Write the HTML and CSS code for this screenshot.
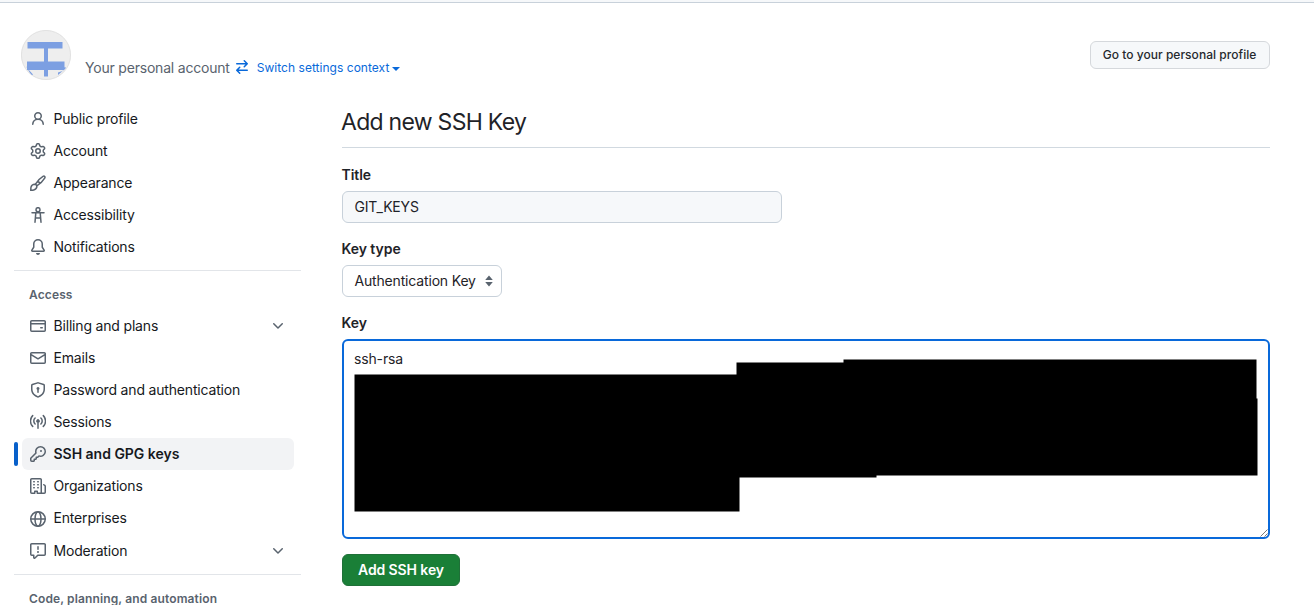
FILE: index.html
```html
<!DOCTYPE html>
<html lang="en">
<head>
<meta charset="utf-8">
<title>Add new SSH Key</title>
<link rel="stylesheet" href="styles.css">
</head>
<body>
<div class="topbar"></div>
<header class="header">
  <svg class="avatar" width="50" height="50" viewBox="0 0 50 50"><defs><clipPath id="round"><circle cx="25" cy="25" r="24.5"/></clipPath></defs><circle cx="25" cy="25" r="24.6" fill="#eee" stroke="#dcdcdc" stroke-width=".8"/><g fill="#7c9fe2" clip-path="url(#round)"><path d="M6.500 12h35v6.500h-35zM23 18h4v14h-4zM6 31.500h37.500v8.500H6zM23 40h4v6.500h-4zM4.500 35.500l2.500 3.500 5 5.500-1.500 1zM37 42.500l4.500-1.500 2.500-4 1 1-8 7z"/></g></svg>
  <div class="context">
    <span class="account">Your personal account</span>
    <svg class="swap" width="16" height="16" viewBox="0 0 16 16"><path d="M5.220 14.780a.75.75 0 0 0 1.060-1.060L4.560 12h8.690a.75.75 0 0 0 0-1.500H4.560l1.720-1.720a.75.75 0 0 0-1.060-1.060l-3 3a.75.75 0 0 0 0 1.060l3 3Zm5.560-6.500a.75.75 0 1 1-1.060-1.060l1.720-1.720H2.750a.75.75 0 0 1 0-1.500h8.690L9.720 2.280a.75.75 0 0 1 1.060-1.060l3 3a.75.75 0 0 1 0 1.060l-3 3Z"/></svg>
    <span class="switch">Switch settings context</span><span class="caret"></span>
  </div>
  <button class="profile-btn"><span>Go to your personal profile</span></button>
</header>
<div class="layout">
<nav class="sidebar">
  <a class="item"><svg class="icon" viewBox="0 0 16 16"><path d="M10.561 8.073a6.005 6.005 0 0 1 3.432 5.142.75.75 0 1 1-1.498.07 4.500 4.500 0 0 0-8.990 0 .75.75 0 0 1-1.498-.07 6.004 6.004 0 0 1 3.431-5.142 3.999 3.999 0 1 1 5.123 0ZM10.500 5a2.500 2.500 0 1 0-5 0 2.500 2.500 0 0 0 5 0Z"/></svg><span>Public profile</span></a>
  <a class="item"><svg class="icon" viewBox="0 0 16 16"><path d="M8 0a8.200 8.200 0 0 1 .701.031C9.444.095 9.990.645 10.160 1.290l.288 1.107c.018.066.079.158.212.224.231.114.454.243.668.386.123.082.233.090.299.071l1.103-.303c.644-.176 1.392.021 1.820.630.270.385.506.792.704 1.218.315.675.111 1.422-.364 1.891l-.814.806c-.049.048-.098.147-.088.294.016.257.016.515 0 .772-.010.147.038.246.088.294l.814.806c.475.469.679 1.216.364 1.891a7.977 7.977 0 0 1-.704 1.217c-.428.610-1.176.807-1.820.630l-1.102-.302c-.067-.019-.177-.011-.300.071a5.909 5.909 0 0 1-.668.386c-.133.066-.194.158-.211.224l-.290 1.106c-.168.646-.715 1.196-1.458 1.260a8.006 8.006 0 0 1-1.402 0c-.743-.064-1.289-.614-1.458-1.260l-.289-1.106c-.018-.066-.079-.158-.212-.224a5.738 5.738 0 0 1-.668-.386c-.123-.082-.233-.090-.299-.071l-1.103.303c-.644.176-1.392-.021-1.820-.630a8.120 8.120 0 0 1-.704-1.218c-.315-.675-.111-1.422.363-1.891l.815-.806c.050-.048.098-.147.088-.294a6.214 6.214 0 0 1 0-.772c.010-.147-.038-.246-.088-.294l-.815-.806C.635 6.045.431 5.298.746 4.623a7.920 7.920 0 0 1 .704-1.217c.428-.610 1.176-.807 1.820-.630l1.102.302c.067.019.177.011.300-.071.214-.143.437-.272.668-.386.133-.066.194-.158.211-.224l.290-1.106C6.009.645 6.556.095 7.299.030 7.530.010 7.764 0 8 0Zm-.571 1.525c-.036.003-.108.036-.137.146l-.289 1.105c-.147.561-.549.967-.998 1.189-.173.086-.340.183-.500.290-.417.278-.970.423-1.529.270l-1.103-.303c-.109-.030-.175.016-.195.045-.220.312-.412.644-.573.990-.014.031-.021.110.059.190l.815.806c.411.406.562.957.530 1.456a4.709 4.709 0 0 0 0 .582c.032.499-.119 1.050-.530 1.456l-.815.806c-.081.080-.073.159-.059.190.162.346.353.677.573.989.020.030.085.076.195.046l1.102-.303c.560-.153 1.113-.008 1.530.270.161.107.328.204.501.290.447.222.850.629.997 1.189l.289 1.105c.029.109.101.143.137.146a6.600 6.600 0 0 0 1.142 0c.036-.003.108-.036.137-.146l.289-1.105c.147-.561.549-.967.998-1.189.173-.086.340-.183.500-.290.417-.278.970-.423 1.529-.270l1.103.303c.109.029.175-.016.195-.045.220-.313.411-.644.573-.990.014-.031.021-.110-.059-.190l-.815-.806c-.411-.406-.562-.957-.530-1.456a4.709 4.709 0 0 0 0-.582c-.032-.499.119-1.050.530-1.456l.815-.806c.081-.080.073-.159.059-.190a6.464 6.464 0 0 0-.573-.989c-.020-.030-.085-.076-.195-.046l-1.102.303c-.560.153-1.113.008-1.530-.270a4.440 4.440 0 0 0-.501-.290c-.447-.222-.850-.629-.997-1.189l-.289-1.105c-.029-.110-.101-.143-.137-.146a6.600 6.600 0 0 0-1.142 0ZM11 8a3 3 0 1 1-6 0 3 3 0 0 1 6 0ZM9.500 8a1.500 1.500 0 1 0-3.001.001A1.500 1.500 0 0 0 9.500 8Z"/></svg><span>Account</span></a>
  <a class="item"><svg class="icon" viewBox="0 0 16 16"><g class="line"><path d="M5.300 9.300C7.200 6.200 10.500 2.900 13 1.400c1.400-.8 2.500.3 1.700 1.700-1.500 2.500-4.800 5.800-7.900 7.700M7.800 6.200c.9.400 1.500 1 2 2M4.900 9.200c-2 0-3.500 1.200-3.900 3-.2 1-.2 2-.2 3 1 0 2 0 3-.2 1.800-.4 3.100-1.900 3.100-3.900C6.700 10 5.900 9.300 4.900 9.200Z"/></g></svg><span>Appearance</span></a>
  <a class="item"><svg class="icon" viewBox="0 0 16 16"><g class="line"><circle cx="8" cy="2.700" r="2"/><path d="M2 5.700h12M5.800 5.900l-.8 9.300M10.200 5.900l.8 9.300M5.600 10.900h4.800"/></g></svg><span>Accessibility</span></a>
  <a class="item"><svg class="icon" viewBox="0 0 16 16"><path d="M8 16a2 2 0 0 0 1.985-1.750c.017-.137-.097-.250-.235-.250h-3.500c-.138 0-.252.113-.235.250A2 2 0 0 0 8 16ZM3 5a5 5 0 0 1 10 0v2.947c0 .050.015.098.042.139l1.703 2.555A1.519 1.519 0 0 1 13.482 13H2.518a1.516 1.516 0 0 1-1.263-2.360l1.703-2.554A.255.255 0 0 0 3 7.947Zm5-3.500A3.500 3.500 0 0 0 4.500 5v2.947c0 .346-.102.683-.294.970l-1.703 2.556a.017.017 0 0 0-.003.010l.001.006.004.006.006.004.007.001h10.964l.007-.001.006-.004.004-.006.001-.007a.017.017 0 0 0-.003-.010l-1.703-2.554a1.745 1.745 0 0 1-.294-.970V5A3.500 3.500 0 0 0 8 1.500Z"/></svg><span>Notifications</span></a>
  <div class="divider"></div>
  <h2 class="group">Access</h2>
  <a class="item"><svg class="icon" viewBox="0 0 16 16"><path d="M10.750 9a.75.75 0 0 0 0 1.500h1.500a.75.75 0 0 0 0-1.500h-1.500Z"/><path d="M0 3.750C0 2.784.784 2 1.750 2h12.500c.966 0 1.750.784 1.750 1.750v8.500A1.750 1.750 0 0 1 14.250 14H1.750A1.750 1.750 0 0 1 0 12.250ZM14.500 6.500h-13v5.750c0 .138.112.250.250.250h12.500a.250.250 0 0 0 .250-.250Zm0-2.750a.250.250 0 0 0-.250-.250H1.750a.250.250 0 0 0-.250.250V5h13Z"/></svg><span>Billing and plans</span><svg class="icon chevron" viewBox="0 0 16 16"><path d="M12.780 5.220a.749.749 0 0 1 0 1.060l-4.250 4.250a.749.749 0 0 1-1.060 0L3.220 6.280a.749.749 0 1 1 1.060-1.060L8 8.939l3.720-3.719a.749.749 0 0 1 1.060 0Z"/></svg></a>
  <a class="item"><svg class="icon" viewBox="0 0 16 16"><path d="M1.750 2h12.500c.966 0 1.750.784 1.750 1.750v8.500A1.750 1.750 0 0 1 14.250 14H1.750A1.750 1.750 0 0 1 0 12.250v-8.500C0 2.784.784 2 1.750 2ZM1.500 12.251c0 .138.112.250.250.250h12.500a.250.250 0 0 0 .250-.250V5.809L8.380 9.397a.75.75 0 0 1-.760 0L1.500 5.809v6.442Zm13-8.181v-.320a.250.250 0 0 0-.250-.250H1.750a.250.250 0 0 0-.250.250v.320L8 7.880Z"/></svg><span>Emails</span></a>
  <a class="item"><svg class="icon" viewBox="0 0 16 16"><path d="m8.533.133 5.250 1.680A1.750 1.750 0 0 1 15 3.480V7c0 1.566-.320 3.182-1.303 4.682-.983 1.498-2.585 2.813-5.032 3.855a1.697 1.697 0 0 1-1.330 0c-2.447-1.042-4.049-2.357-5.032-3.855C1.320 10.182 1 8.566 1 7V3.480a1.755 1.755 0 0 1 1.217-1.667l5.250-1.680a1.748 1.748 0 0 1 1.066 0Zm-.610 1.429-5.250 1.680a.251.251 0 0 0-.173.237V7c0 1.360.275 2.666 1.057 3.859.784 1.194 2.121 2.342 4.366 3.298a.196.196 0 0 0 .154 0c2.245-.957 3.582-2.103 4.366-3.297C13.225 9.666 13.500 8.358 13.500 7V3.480a.250.250 0 0 0-.174-.238l-5.250-1.680a.250.250 0 0 0-.153 0ZM9.500 6.500c0 .536-.286 1.032-.750 1.300v2.450a.75.75 0 0 1-1.500 0V7.800A1.500 1.500 0 1 1 9.500 6.500Z"/></svg><span>Password and authentication</span></a>
  <a class="item"><svg class="icon" viewBox="0 0 16 16"><path d="M8.750 8.582v5.668a.75.75 0 0 1-1.500 0V8.582a1.750 1.750 0 1 1 1.500 0Z"/><g class="line"><path d="M5.100 4a4.100 4.100 0 0 0 0 6M10.900 4a4.100 4.100 0 0 1 0 6M2.700 1.600a7.600 7.600 0 0 0 0 10.800M13.300 1.600a7.600 7.600 0 0 1 0 10.800"/></g></svg><span>Sessions</span></a>
  <a class="item active"><svg class="icon" viewBox="0 0 16 16"><path d="M10.500 0a5.499 5.499 0 1 1-1.288 10.848l-.932.932a.749.749 0 0 1-.530.220H7v.750a.749.749 0 0 1-.220.530l-.500.500a.749.749 0 0 1-.530.220H5v.750a.749.749 0 0 1-.220.530l-.500.500a.749.749 0 0 1-.530.220h-2A1.750 1.750 0 0 1 0 14.250v-2c0-.199.079-.389.220-.530l4.932-4.932A5.500 5.500 0 0 1 10.500 0Zm-4 5.500c-.001.431.069.860.205 1.269a.75.75 0 0 1-.181.768L1.500 12.560v1.690c0 .138.112.250.250.250h1.690l.060-.060v-1.190a.75.75 0 0 1 .750-.750h1.190l.060-.060v-1.190a.75.75 0 0 1 .750-.750h1.190l1.023-1.025a.75.75 0 0 1 .768-.180A4 4 0 1 0 6.500 5.500ZM11 6a1 1 0 1 1 0-2 1 1 0 0 1 0 2Z"/></svg><span>SSH and GPG keys</span></a>
  <a class="item"><svg class="icon" viewBox="0 0 16 16"><path d="M1.750 16A1.750 1.750 0 0 1 0 14.250V1.750C0 .784.784 0 1.750 0h8.500C11.216 0 12 .784 12 1.750v12.500c0 .085-.006.168-.018.250h2.268a.250.250 0 0 0 .250-.250V8.285a.250.250 0 0 0-.111-.208l-1.055-.703a.749.749 0 1 1 .832-1.248l1.055.703c.487.325.779.871.779 1.456v5.965A1.750 1.750 0 0 1 14.250 16h-3.500a.766.766 0 0 1-.197-.026c-.099.017-.200.026-.303.026h-3a.75.75 0 0 1-.750-.750V14h-1v1.250a.75.75 0 0 1-.750.750Zm-.250-1.750c0 .138.112.250.250.250H4v-1.250a.75.75 0 0 1 .750-.750h2.500a.75.75 0 0 1 .750.750v1.250h2.250a.250.250 0 0 0 .250-.250V1.750a.250.250 0 0 0-.250-.250h-8.500a.250.250 0 0 0-.250.250ZM3.750 6h.500a.75.75 0 0 1 0 1.500h-.500a.75.75 0 0 1 0-1.500ZM3 3.750A.75.75 0 0 1 3.750 3h.500a.75.75 0 0 1 0 1.500h-.500A.75.75 0 0 1 3 3.750Zm4 3A.75.75 0 0 1 7.750 6h.500a.75.75 0 0 1 0 1.500h-.500A.75.75 0 0 1 7 6.750ZM7.750 3h.500a.75.75 0 0 1 0 1.500h-.500a.75.75 0 0 1 0-1.500ZM3 9.750A.75.75 0 0 1 3.750 9h.500a.75.75 0 0 1 0 1.500h-.500A.75.75 0 0 1 3 9.750ZM7.750 9h.500a.75.75 0 0 1 0 1.500h-.500a.75.75 0 0 1 0-1.500Z"/></svg><span>Organizations</span></a>
  <a class="item low"><svg class="icon" viewBox="0 0 16 16"><g class="line"><circle cx="8" cy="8" r="7.250"/><ellipse cx="8" cy="8" rx="3" ry="7.250"/><path d="M1 8h14"/></g></svg><span>Enterprises</span></a>
  <a class="item last"><svg class="icon" viewBox="0 0 16 16"><path d="M0 1.750C0 .784.784 0 1.750 0h12.500C15.216 0 16 .784 16 1.750v9.500A1.750 1.750 0 0 1 14.250 13H8.060l-2.573 2.573A1.458 1.458 0 0 1 3 14.543V13H1.750A1.750 1.750 0 0 1 0 11.250Zm1.750-.250a.250.250 0 0 0-.250.250v9.500c0 .138.112.250.250.250h2a.75.75 0 0 1 .750.750v2.190l2.720-2.720a.749.749 0 0 1 .530-.220h6.500a.250.250 0 0 0 .250-.250v-9.500a.250.250 0 0 0-.250-.250Zm7 2.250v2.500a.75.75 0 0 1-1.500 0v-2.500a.75.75 0 0 1 1.500 0ZM9 9a1 1 0 1 1-2 0 1 1 0 0 1 2 0Z"/></svg><span>Moderation</span><svg class="icon chevron" viewBox="0 0 16 16"><path d="M12.780 5.220a.749.749 0 0 1 0 1.060l-4.250 4.250a.749.749 0 0 1-1.060 0L3.220 6.280a.749.749 0 1 1 1.060-1.060L8 8.939l3.720-3.719a.749.749 0 0 1 1.060 0Z"/></svg></a>
  <div class="divider"></div>
  <h2 class="group">Code, planning, and automation</h2>
</nav>
<main class="main">
  <h1 class="title"><span>Add new SSH Key</span></h1>
  <div class="label"><span>Title</span></div>
  <div class="field name"><span>GIT_KEYS</span></div>
  <div class="label"><span>Key type</span></div>
  <div class="field select"><span>Authentication Key</span><svg width="8" height="12" viewBox="0 0 8 12"><path d="M4 .5 7.800 4.900H.2zM4 11.500.2 7.100h7.600z"/></svg></div>
  <div class="label"><span>Key</span></div>
  <div class="keybox"><span>ssh-rsa</span>
    <svg class="redaction" width="904" height="153" viewBox="0 0 904 153"><path d="M.5 15.500h382v-12h107v-3h413v39h1v77H522.500v2h-137v34H.5z"/></svg>
    <svg class="grip" width="8" height="8" viewBox="0 0 8 8"><path d="M.5 7.500l7-7M4.500 7.500l3-3"/></svg>
  </div>
  <button class="submit"><span>Add SSH key</span></button>
</main>
</div>
</body>
</html>
```
FILE: styles.css
```css
* { box-sizing: border-box; }
body { margin: 0; height: 605px; overflow: hidden; background: #fff; color: #1f2328; font: 14px/20px Inter, "Liberation Sans", sans-serif; }
button { font-family: inherit; padding: 0; }
.topbar { height: 3px; background: #f6f8fa; border-bottom: 1px solid #c8d1da; }
.header { display: flex; height: 100px; padding: 27px 44px 0 21px; }
.avatar { flex: none; }
.context { display: flex; align-items: center; height: 20px; margin: 28px 0 0 14px; color: #59636e; }
.account { letter-spacing: -.2px; }
.swap { margin: -2px 7px 0 4px; fill: #0969da; }
.switch { margin-top: -1px; color: #0969da; font-size: 12px; letter-spacing: .03px; }
.caret { margin: 2px 0 0 3px; border: 4px solid transparent; border-top-color: #0969da; border-bottom: 0; }
.profile-btn { width: 180px; height: 28px; margin: 11px 0 0 auto; padding: 0 1px 2px 0; border: 1px solid #d5d8dc; border-radius: 6px; background: #f6f8fa; color: #25292e; font-size: 12px; font-weight: 500; letter-spacing: .04px; }
.layout { display: flex; gap: 41px; }
.sidebar { width: 287px; margin-left: 14px; }
.item { position: relative; display: flex; align-items: center; gap: 7.5px; height: 32px; margin: 0 7px 0 8px; padding: 0 8px; border-radius: 6px; color: #16191d; letter-spacing: -.18px; }
.icon { flex: none; width: 16px; height: 16px; fill: #59636e; }
.line { fill: none; stroke: #59636e; stroke-width: 1.5; stroke-linecap: round; }
.chevron { margin-left: auto; }
.active { background: #f2f3f5; font-weight: 600; letter-spacing: -.02px; }
.active::before { content: ""; position: absolute; left: -8px; top: 4px; width: 4px; height: 24px; border-radius: 3px; background: #0860ca; }
.low .icon { margin-top: 1px; }
.last { margin-top: 1px; }
.divider { height: 1px; margin: 7px 0 14px; background: #e2e5e9; }
.group { margin: 0 0 5px 15px; font-size: 12px; line-height: 20px; font-weight: 600; letter-spacing: .13px; color: #59636e; }
.main { width: 928px; }
.title { height: 45px; margin: 0 0 17px; padding-top: 3px; border-bottom: 1px solid #d1d9e0; font-size: 23px; line-height: 32px; font-weight: 400; letter-spacing: -.72px; }
.title span { margin-left: -1px; }
.label { height: 20px; margin-bottom: 6px; font-weight: 600; letter-spacing: -.05px; }
.label span { margin-left: -.5px; }
.field { display: flex; align-items: center; height: 32px; margin-bottom: 16px; padding: 0 11.5px; border: 1px solid #c8d1da; border-radius: 6px; letter-spacing: -.17px; }
.name { width: 440px; background: #f6f8fa; }
.select { width: 160px; justify-content: space-between; padding-right: 8px; white-space: nowrap; }
.select svg { fill: #59636e; }
.keybox { position: relative; height: 200px; padding: 8px 10px; border: 2px solid #0969da; border-radius: 6px; letter-spacing: -.15px; }
.redaction { position: absolute; left: 10px; top: 18px; }
.grip { position: absolute; right: 0; bottom: 0; fill: none; stroke: #555; stroke-width: .8; }
.submit { display: block; width: 118px; height: 32px; margin-top: 15px; padding-bottom: 2px; border: 1px solid #1f7038; border-radius: 6px; background: #1a7f37; color: #fff; font-size: 14px; font-weight: 600; letter-spacing: -.1px; }
```
